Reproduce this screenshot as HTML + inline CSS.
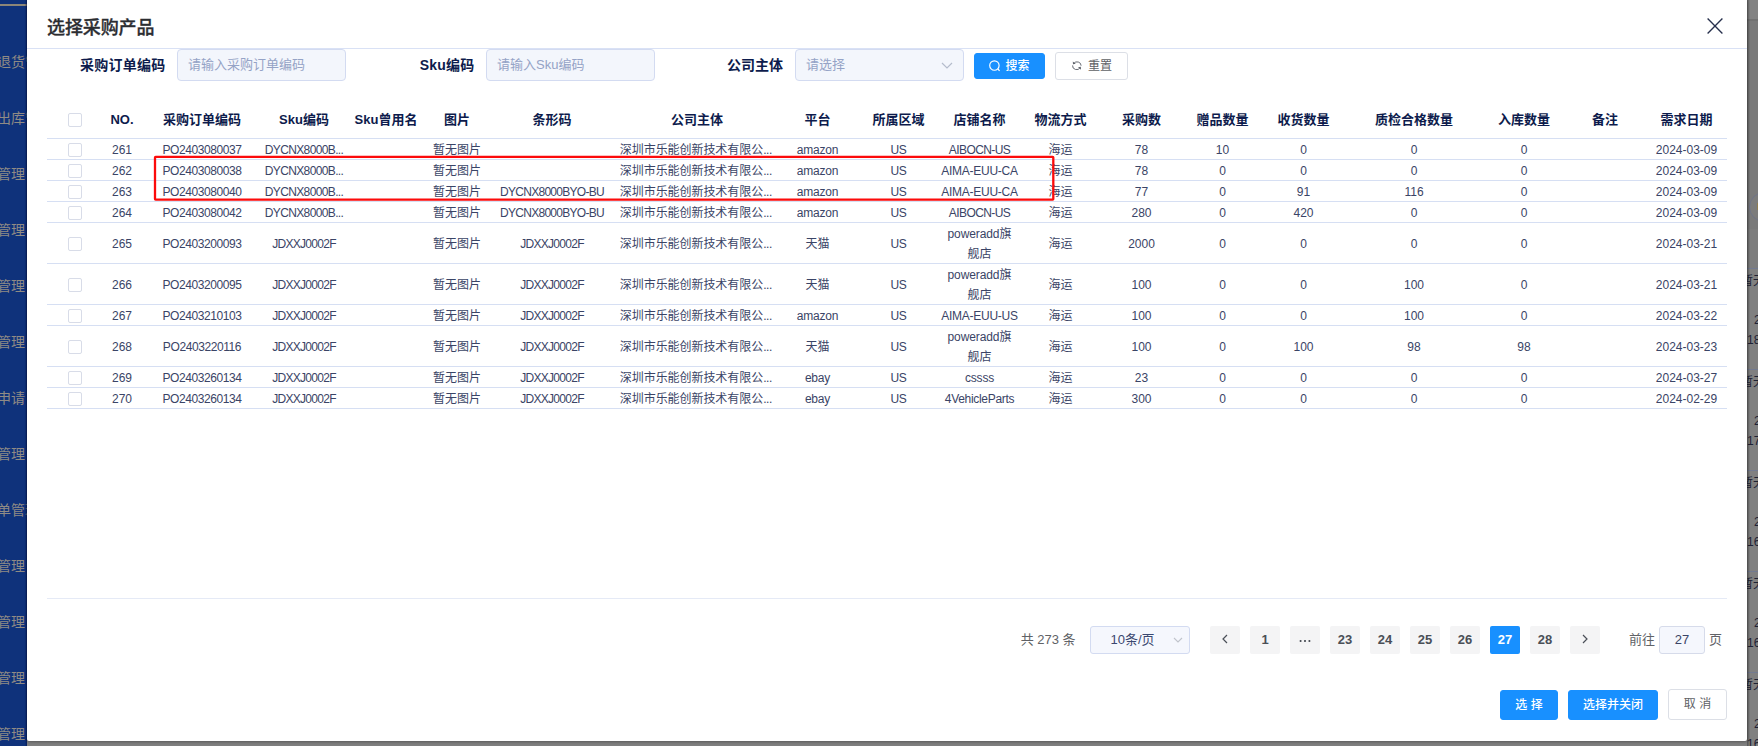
<!DOCTYPE html>
<html lang="zh-CN">
<head>
<meta charset="utf-8">
<title>选择采购产品</title>
<style>
*{box-sizing:border-box;margin:0;padding:0}
html,body{width:1758px;height:746px;overflow:hidden;background:#7f7f7f;font-family:"Liberation Sans","Noto Sans CJK SC",sans-serif;color:#3a4466}
.bg{position:absolute;left:0;top:0;width:1758px;height:746px;overflow:hidden;background:#7f7f7f}
.side{position:absolute;left:0;top:0;width:27px;height:746px;background:#0f327b;overflow:hidden}
.side:after{content:'';position:absolute;left:25px;top:0;width:2px;height:746px;background:linear-gradient(to right,rgba(0,10,60,0),rgba(0,10,60,0.55))}
.sline{position:absolute;left:0;top:4px;width:27px;height:2px;background:#8c8678}
.sitem{position:absolute;left:-3px;width:60px;font-size:14px;line-height:20px;color:#8f8b85;white-space:nowrap}
.bgright{position:absolute;left:1747px;top:0;width:11px;height:746px;overflow:hidden;color:#1c1c1c;font-size:12px}
.dlg{position:absolute;left:27px;top:0;width:1720px;height:741px;background:#fff;border-radius:0 0 2px 2px;box-shadow:0 1px 3px rgba(0,0,0,0.3)}
.dhead{position:absolute;left:0;top:0;width:1720px;height:49px;border-bottom:1px solid #d9e1f5}
.dtitle{position:absolute;left:20px;top:15px;letter-spacing:-0.1px;font-size:18px;line-height:26px;color:#2b2d31;font-weight:500;-webkit-text-stroke:0.3px #2b2d31}
.dclose{position:absolute;left:1680.4px;top:17.9px}
.flabel{position:absolute;top:54px;height:22px;line-height:22px;font-size:14px;font-weight:bold;color:#0d1b4c;text-align:right;white-space:nowrap}
.finput{position:absolute;top:49px;height:32px;width:169px;border:1px solid #d3dbf1;border-radius:4px;background:#f3f6fc;font-size:13px;line-height:30px;color:#95a3c6;padding-left:10px;white-space:nowrap}
.btn{position:absolute;border-radius:3px;font-size:12px;text-align:center;white-space:nowrap}
.btn.pri{background:#1890ff;color:#fff;border:1px solid #1890ff;font-weight:500}
.btn.def{background:#fff;color:#606266;border:1px solid #dcdfe6}
.tb{position:absolute;left:20px;top:100px;width:1680px;border-collapse:collapse;table-layout:fixed;font-size:12px}
.tb th{height:38px;font-size:13px;font-weight:bold;color:#0d1b4c;text-align:center;vertical-align:middle;border-bottom:1px solid #d6dff3;white-space:nowrap;padding:2px 0 0 0;line-height:20px}
.tb td{text-align:center;vertical-align:middle;border-bottom:1px solid #d6dff3;white-space:nowrap;padding:2px 0 0 0;color:#3a4466;line-height:18px;overflow:hidden}
.tb tr.sm td{height:21px}
.tb tr.tall td{height:41px}
.tb td.two{line-height:20px;padding:0}
.tb td.two span.w{position:relative;top:1px;display:inline-block}
.cb{display:inline-block;width:14px;height:14px;border:1px solid #d8dce8;border-radius:2px;background:#fff;vertical-align:middle}
.redbox{position:absolute;left:0;top:0;pointer-events:none}
.pline{position:absolute;left:20px;top:598px;width:1680px;height:1px;background:#e5eaf6}
.pg{position:absolute;top:626px;height:28px;line-height:28px;font-size:13px;color:#606266;white-space:nowrap}
.pbtn{position:absolute;top:626px;width:30px;height:28px;line-height:28px;border-radius:2px;background:#f4f4f5;color:#4a4f57;font-size:13px;font-weight:bold;text-align:center}
.pbtn.on{background:#1890ff;color:#fff}
.pbox{position:absolute;top:626px;height:28px;border:1px solid #d3dbf1;border-radius:3px;background:#f5f7fd;font-size:13px;line-height:26px;color:#606266;text-align:center}
.bl{position:absolute;left:0;width:11px;height:1px;background:#727a90}
.bt{position:absolute;font-size:12px;line-height:18px;color:#1d2134;white-space:nowrap}
</style>
</head>
<body>
<div class="bg">
<div class="bgright">
<div style="position:absolute;left:0;top:0;width:11px;height:20px;background:#838383"></div>
<div style="position:absolute;left:0;top:19px;width:11px;height:2px;background:#727272"></div>
<div style="position:absolute;left:0;top:21px;width:11px;height:208px;background:#7a7a7a"></div>
<div style="position:absolute;left:0;top:229px;width:11px;height:40px;background:#7d7d7d"></div>
<div style="position:absolute;left:0;top:268px;width:11px;height:478px;background:#808080"></div>
<div style="position:absolute;left:2px;top:191.5px;width:30px;height:30px;border-radius:15px;border:1px solid #6f7489;background:#7c7c7c"></div>
<div style="position:absolute;left:10px;top:203px;width:3px;height:7px;background:#8f7d52"></div>
<div class="bl" style="top:268px"></div>
<div class="bt" style="left:-6px;top:272px">暂无图片</div>
<div class="bt" style="left:7px;top:311px">2024-03-27</div>
<div class="bt" style="left:0px;top:331px">18:26:41</div>
<div class="bl" style="top:369px"></div>
<div class="bt" style="left:-6px;top:373px">暂无图片</div>
<div class="bt" style="left:7px;top:412px">2024-03-27</div>
<div class="bt" style="left:0px;top:432px">17:52:08</div>
<div class="bl" style="top:470px"></div>
<div class="bt" style="left:-6px;top:474px">暂无图片</div>
<div class="bt" style="left:7px;top:513px">2024-03-27</div>
<div class="bt" style="left:0px;top:533px">16:40:15</div>
<div class="bl" style="top:571px"></div>
<div class="bt" style="left:-6px;top:575px">暂无图片</div>
<div class="bt" style="left:7px;top:614px">2024-03-27</div>
<div class="bt" style="left:0px;top:634px">16:31:27</div>
<div class="bl" style="top:672px"></div>
<div class="bt" style="left:-6px;top:676px">暂无图片</div>
<div class="bt" style="left:7px;top:715px">2024-03-27</div>
<div class="bt" style="left:0px;top:735px">16:05:33</div>
<div style="position:absolute;left:0;top:0;width:3px;height:746px;background:linear-gradient(to right,rgba(0,0,0,0.34),rgba(0,0,0,0))"></div>
</div>
<div class="side"><div class="sline"></div>
<div class="sitem" style="top:52px">退货管理</div>
<div class="sitem" style="top:108px">出库管理</div>
<div class="sitem" style="top:164px">管理</div>
<div class="sitem" style="top:220px">管理</div>
<div class="sitem" style="top:276px">管理</div>
<div class="sitem" style="top:332px">管理</div>
<div class="sitem" style="top:388px">申请</div>
<div class="sitem" style="top:444px">管理</div>
<div class="sitem" style="top:500px">单管理</div>
<div class="sitem" style="top:556px">管理</div>
<div class="sitem" style="top:612px">管理</div>
<div class="sitem" style="top:668px">管理</div>
<div class="sitem" style="top:724px">管理</div>
</div>
</div>
<div class="dlg">
<div class="dhead"><span class="dtitle">选择采购产品</span><svg class="dclose" viewBox="0 0 16 16" width="16" height="16"><path d="M0.6 0.6 L15.4 15.4 M15.4 0.6 L0.6 15.4" stroke="#27304d" stroke-width="1.35" fill="none"/></svg></div>
<div class="flabel" style="left:41.5px;width:97px;letter-spacing:0.25px">采购订单编码</div>
<div class="finput" style="left:150px">请输入采购订单编码</div>
<div class="flabel" style="left:381.5px;width:66px;letter-spacing:0.2px">Sku编码</div>
<div class="finput" style="left:459px">请输入Sku编码</div>
<div class="flabel" style="left:680px;width:76px">公司主体</div>
<div class="finput" style="left:768px">请选择<svg style="position:absolute;left:144.5px;top:11.5px" width="12" height="8" viewBox="0 0 12 8"><path d="M1 1 L6 6 L11 1" stroke="#b4bccc" stroke-width="1.2" fill="none"/></svg></div>
<div class="btn pri" style="left:947px;top:53px;width:71px;height:26px;line-height:24px"><svg style="vertical-align:-2px;margin-right:4px" width="12" height="12" viewBox="0 0 12 12"><circle cx="5.4" cy="5.5" r="4.7" stroke="#fff" stroke-width="1.15" fill="none"/><path d="M8.9 9.0 L10.6 10.8" stroke="#fff" stroke-width="1.15"/></svg>搜索</div>
<div class="btn def" style="left:1028px;top:52px;width:73px;height:28px;line-height:26px"><svg style="position:absolute;left:15.6px;top:8.1px" width="10" height="9.6" preserveAspectRatio="none" viewBox="0 0 10 10"><path d="M1.8 2.6 A4 4 0 0 1 9.1 4.9" stroke="#5d6169" stroke-width="0.95" fill="none"/><path d="M0.8 0.5 L3.8 2.9 L1.0 3.5 Z" fill="#5d6169"/><path d="M0.6 4.6 A4 4 0 0 0 8.1 6.9" stroke="#5d6169" stroke-width="0.95" fill="none"/><path d="M9.0 9.0 L6.0 6.6 L8.8 6.0 Z" fill="#5d6169"/></svg><span style="position:absolute;left:32px;top:0">重置</span></div>
<table class="tb">
<colgroup><col style="width:56px"><col style="width:38px"><col style="width:122px"><col style="width:82px"><col style="width:82px"><col style="width:60px"><col style="width:130px"><col style="width:160px"><col style="width:81px"><col style="width:81px"><col style="width:81px"><col style="width:81px"><col style="width:81px"><col style="width:81px"><col style="width:81px"><col style="width:140px"><col style="width:80px"><col style="width:82px"><col style="width:81px"></colgroup>
<thead><tr><th><span class="cb"></span></th><th>NO.</th><th>采购订单编码</th><th>Sku编码</th><th>Sku曾用名</th><th>图片</th><th>条形码</th><th>公司主体</th><th>平台</th><th>所属区域</th><th>店铺名称</th><th>物流方式</th><th>采购数</th><th>赠品数量</th><th>收货数量</th><th>质检合格数量</th><th>入库数量</th><th>备注</th><th>需求日期</th></tr></thead>
<tbody>
<tr class="sm"><td><span class="cb"></span></td><td>261</td><td><span style="letter-spacing:-0.41px">PO2403080037</span></td><td><span style="letter-spacing:-0.63px">DYCNX8000B...</span></td><td></td><td>暂无图片</td><td></td><td><span style="position:relative;left:-1.2px;letter-spacing:-0.06px">深圳市乐能创新技术有限公<span style="letter-spacing:-0.45px">...</span></span></td><td><span style="letter-spacing:-0.23px">amazon</span></td><td><span style="letter-spacing:-0.30px">US</span></td><td><span style="letter-spacing:-0.59px">AIBOCN-US</span></td><td>海运</td><td>78</td><td>10</td><td>0</td><td>0</td><td>0</td><td></td><td>2024-03-09</td></tr>
<tr class="sm"><td><span class="cb"></span></td><td>262</td><td><span style="letter-spacing:-0.41px">PO2403080038</span></td><td><span style="letter-spacing:-0.63px">DYCNX8000B...</span></td><td></td><td>暂无图片</td><td></td><td><span style="position:relative;left:-1.2px;letter-spacing:-0.06px">深圳市乐能创新技术有限公<span style="letter-spacing:-0.45px">...</span></span></td><td><span style="letter-spacing:-0.23px">amazon</span></td><td><span style="letter-spacing:-0.30px">US</span></td><td><span style="letter-spacing:-0.27px">AIMA-EUU-CA</span></td><td>海运</td><td>78</td><td>0</td><td>0</td><td>0</td><td>0</td><td></td><td>2024-03-09</td></tr>
<tr class="sm"><td><span class="cb"></span></td><td>263</td><td><span style="letter-spacing:-0.41px">PO2403080040</span></td><td><span style="letter-spacing:-0.63px">DYCNX8000B...</span></td><td></td><td>暂无图片</td><td><span style="letter-spacing:-0.71px">DYCNX8000BYO-BU</span></td><td><span style="position:relative;left:-1.2px;letter-spacing:-0.06px">深圳市乐能创新技术有限公<span style="letter-spacing:-0.45px">...</span></span></td><td><span style="letter-spacing:-0.23px">amazon</span></td><td><span style="letter-spacing:-0.30px">US</span></td><td><span style="letter-spacing:-0.27px">AIMA-EUU-CA</span></td><td>海运</td><td>77</td><td>0</td><td>91</td><td>116</td><td>0</td><td></td><td>2024-03-09</td></tr>
<tr class="sm"><td><span class="cb"></span></td><td>264</td><td><span style="letter-spacing:-0.41px">PO2403080042</span></td><td><span style="letter-spacing:-0.63px">DYCNX8000B...</span></td><td></td><td>暂无图片</td><td><span style="letter-spacing:-0.71px">DYCNX8000BYO-BU</span></td><td><span style="position:relative;left:-1.2px;letter-spacing:-0.06px">深圳市乐能创新技术有限公<span style="letter-spacing:-0.45px">...</span></span></td><td><span style="letter-spacing:-0.23px">amazon</span></td><td><span style="letter-spacing:-0.30px">US</span></td><td><span style="letter-spacing:-0.59px">AIBOCN-US</span></td><td>海运</td><td>280</td><td>0</td><td>420</td><td>0</td><td>0</td><td></td><td>2024-03-09</td></tr>
<tr class="tall"><td><span class="cb"></span></td><td>265</td><td><span style="letter-spacing:-0.41px">PO2403200093</span></td><td><span style="letter-spacing:-0.72px">JDXXJ0002F</span></td><td></td><td>暂无图片</td><td><span style="letter-spacing:-0.72px">JDXXJ0002F</span></td><td><span style="position:relative;left:-1.2px;letter-spacing:-0.06px">深圳市乐能创新技术有限公<span style="letter-spacing:-0.45px">...</span></span></td><td>天猫</td><td><span style="letter-spacing:-0.30px">US</span></td><td class="two"><span class="w"><span style="letter-spacing:-0.1px">poweradd</span>旗<br>舰店</span></td><td>海运</td><td>2000</td><td>0</td><td>0</td><td>0</td><td>0</td><td></td><td>2024-03-21</td></tr>
<tr class="tall"><td><span class="cb"></span></td><td>266</td><td><span style="letter-spacing:-0.41px">PO2403200095</span></td><td><span style="letter-spacing:-0.72px">JDXXJ0002F</span></td><td></td><td>暂无图片</td><td><span style="letter-spacing:-0.72px">JDXXJ0002F</span></td><td><span style="position:relative;left:-1.2px;letter-spacing:-0.06px">深圳市乐能创新技术有限公<span style="letter-spacing:-0.45px">...</span></span></td><td>天猫</td><td><span style="letter-spacing:-0.30px">US</span></td><td class="two"><span class="w"><span style="letter-spacing:-0.1px">poweradd</span>旗<br>舰店</span></td><td>海运</td><td>100</td><td>0</td><td>0</td><td>100</td><td>0</td><td></td><td>2024-03-21</td></tr>
<tr class="sm"><td><span class="cb"></span></td><td>267</td><td><span style="letter-spacing:-0.41px">PO2403210103</span></td><td><span style="letter-spacing:-0.72px">JDXXJ0002F</span></td><td></td><td>暂无图片</td><td><span style="letter-spacing:-0.72px">JDXXJ0002F</span></td><td><span style="position:relative;left:-1.2px;letter-spacing:-0.06px">深圳市乐能创新技术有限公<span style="letter-spacing:-0.45px">...</span></span></td><td><span style="letter-spacing:-0.23px">amazon</span></td><td><span style="letter-spacing:-0.30px">US</span></td><td><span style="letter-spacing:-0.27px">AIMA-EUU-US</span></td><td>海运</td><td>100</td><td>0</td><td>0</td><td>100</td><td>0</td><td></td><td>2024-03-22</td></tr>
<tr class="tall"><td><span class="cb"></span></td><td>268</td><td><span style="letter-spacing:-0.41px">PO2403220116</span></td><td><span style="letter-spacing:-0.72px">JDXXJ0002F</span></td><td></td><td>暂无图片</td><td><span style="letter-spacing:-0.72px">JDXXJ0002F</span></td><td><span style="position:relative;left:-1.2px;letter-spacing:-0.06px">深圳市乐能创新技术有限公<span style="letter-spacing:-0.45px">...</span></span></td><td>天猫</td><td><span style="letter-spacing:-0.30px">US</span></td><td class="two"><span class="w"><span style="letter-spacing:-0.1px">poweradd</span>旗<br>舰店</span></td><td>海运</td><td>100</td><td>0</td><td>100</td><td>98</td><td>98</td><td></td><td>2024-03-23</td></tr>
<tr class="sm"><td><span class="cb"></span></td><td>269</td><td><span style="letter-spacing:-0.41px">PO2403260134</span></td><td><span style="letter-spacing:-0.72px">JDXXJ0002F</span></td><td></td><td>暂无图片</td><td><span style="letter-spacing:-0.72px">JDXXJ0002F</span></td><td><span style="position:relative;left:-1.2px;letter-spacing:-0.06px">深圳市乐能创新技术有限公<span style="letter-spacing:-0.45px">...</span></span></td><td><span style="letter-spacing:-0.20px">ebay</span></td><td><span style="letter-spacing:-0.30px">US</span></td><td><span style="letter-spacing:-0.20px">cssss</span></td><td>海运</td><td>23</td><td>0</td><td>0</td><td>0</td><td>0</td><td></td><td>2024-03-27</td></tr>
<tr class="sm"><td><span class="cb"></span></td><td>270</td><td><span style="letter-spacing:-0.41px">PO2403260134</span></td><td><span style="letter-spacing:-0.72px">JDXXJ0002F</span></td><td></td><td>暂无图片</td><td><span style="letter-spacing:-0.72px">JDXXJ0002F</span></td><td><span style="position:relative;left:-1.2px;letter-spacing:-0.06px">深圳市乐能创新技术有限公<span style="letter-spacing:-0.45px">...</span></span></td><td><span style="letter-spacing:-0.20px">ebay</span></td><td><span style="letter-spacing:-0.30px">US</span></td><td><span style="letter-spacing:-0.31px">4VehicleParts</span></td><td>海运</td><td>300</td><td>0</td><td>0</td><td>0</td><td>0</td><td></td><td>2024-02-29</td></tr>
</tbody></table>
<svg class="redbox" width="1720" height="741" viewBox="0 0 1720 741"><rect x="128.0" y="156.8" width="898.3" height="42.9" rx="0.6" ry="0.6" fill="none" stroke="#fc0b0b" stroke-width="2.3"/></svg>
<div class="pline"></div>
<div class="pg" style="left:993.7px">共 273 条</div>
<div class="pbox" style="left:1063px;width:100px;text-align:left;padding-left:19.5px;color:#3b4870">10条/页<svg style="position:absolute;left:82px;top:10px" width="10" height="7" viewBox="0 0 10 7"><path d="M1 1 L5 5 L9 1" stroke="#c0c4cc" stroke-width="1.1" fill="none"/></svg></div>
<div class="pbtn" style="left:1183px"><svg width="8" height="10" viewBox="0 0 8 10"><path d="M6 1 L2 5 L6 9" stroke="#4a4f57" stroke-width="1.2" fill="none"/></svg></div>
<div class="pbtn" style="left:1223px">1</div>
<div class="pbtn" style="left:1263px"><svg style="position:absolute;left:9px;top:12.6px" width="12" height="4" viewBox="0 0 12 4"><circle cx="1.6" cy="2" r="1.05" fill="#3f444c"/><circle cx="6" cy="2" r="1.05" fill="#3f444c"/><circle cx="10.4" cy="2" r="1.05" fill="#3f444c"/></svg></div>
<div class="pbtn" style="left:1303px">23</div>
<div class="pbtn" style="left:1343px">24</div>
<div class="pbtn" style="left:1383px">25</div>
<div class="pbtn" style="left:1423px">26</div>
<div class="pbtn on" style="left:1463px">27</div>
<div class="pbtn" style="left:1503px">28</div>
<div class="pbtn" style="left:1543px"><svg width="8" height="10" viewBox="0 0 8 10"><path d="M2 1 L6 5 L2 9" stroke="#4a4f57" stroke-width="1.2" fill="none"/></svg></div>
<div class="pg" style="left:1602px">前往</div>
<div class="pbox" style="left:1632px;width:46px;color:#3a4466;border-color:#d6dbea">27</div>
<div class="pg" style="left:1682px">页</div>
<div class="btn pri" style="left:1473px;top:690px;width:58px;height:30px;line-height:29px">选 择</div>
<div class="btn pri" style="left:1541px;top:690px;width:90px;height:30px;line-height:29px">选择并关闭</div>
<div class="btn def" style="left:1641px;top:689px;width:59px;height:31px;line-height:29px">取 消</div>
</div>
</body>
</html>
